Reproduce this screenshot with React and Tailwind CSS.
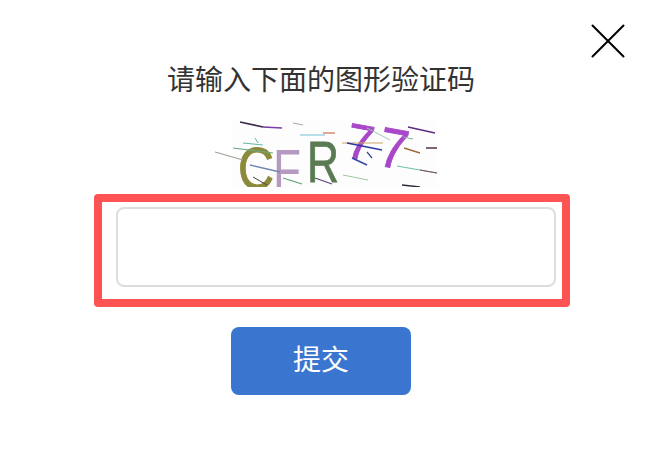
function Captcha() {
  const lines = [
    [240,122,263,127,"#3a2a4a",1.6],[263,127,282,128,"#7a3aa8",1.4],[293,123,303,125,"#a8a8a0",1],
    [300,135,325,135,"#8ec8d8",1.2],[323,133,335,133,"#d07050",1.2],[342,143,383,143,"#c8a860",1.2],
    [347,143,382,150,"#2838a0",1.4],[367,128,390,140,"#a0c8b8",1],[408,127,435,133,"#5a2a80",1.4],
    [403,137,413,139,"#80b0a0",1],[404,148,420,153,"#a06840",1.4],[426,148,437,148,"#40283a",1.4],
    [397,166,437,173,"#70c0b0",1.2],[420,170,437,173,"#805050",1.2],[402,185,420,187,"#302838",1.4],
    [215,152,243,160,"#a0a098",1.2],[233,148,273,153,"#70a880",1.2],[243,143,263,145,"#60b8a0",1],
    [255,138,258,143,"#60b8a0",1],[250,165,280,172,"#7088b0",1.3],[283,178,302,184,"#60a070",1.2],
    [315,178,332,184,"#604878",1.3],[343,175,368,180,"#a0c8a0",1],[352,158,367,165,"#3848a8",1.6],
    [367,152,372,158,"#384890",1.2],[253,177,267,185,"#504838",1],
  ];
  return (
    <svg width="232" height="67" viewBox="212 120 232 67" className="block blur-[0.4px]" aria-label="CFR77">
      <rect x="232" y="120" width="205" height="67" fill="#fdfdfe" />
      <text x="238" y="189" fontFamily="Liberation Sans, sans-serif" fontSize="60" fill="#8b8a3a" stroke="#8b8a3a" strokeWidth="1" textLength="36" lengthAdjust="spacingAndGlyphs">C</text>
      <text x="273" y="190" fontFamily="Liberation Sans, sans-serif" fontSize="58" fill="#b49ac0" textLength="28" lengthAdjust="spacingAndGlyphs">F</text>
      <text x="307" y="182" fontFamily="Liberation Sans, sans-serif" fontSize="57" fill="#5a7a52" stroke="#5a7a52" strokeWidth="0.8" textLength="32" lengthAdjust="spacingAndGlyphs">R</text>
      <text x="344" y="157" fontFamily="Liberation Sans, sans-serif" fontSize="50" fill="#a848c8" stroke="#a848c8" strokeWidth="0.8" textLength="27" lengthAdjust="spacingAndGlyphs" transform="rotate(10 344 157)">7</text>
      <text x="376" y="165" fontFamily="Liberation Sans, sans-serif" fontSize="56" fill="#a848c8" stroke="#a848c8" strokeWidth="0.8" textLength="29" lengthAdjust="spacingAndGlyphs" transform="rotate(10 376 165)">7</text>
      {lines.map(([a,b,c,d,s,w],i)=>(<line key={i} x1={a} y1={b} x2={c} y2={d} stroke={s} strokeWidth={w} />))}
    </svg>
  );
}
export default function App() {
  return (
    <div className="relative w-[650px] h-[452px] bg-white overflow-hidden font-['Liberation_Sans','Noto_Sans_CJK_SC',sans-serif]">
      <button className="absolute top-[24px] right-[25px] w-[34px] h-[34px]" aria-label="关闭">
        <svg width="34" height="34" viewBox="0 0 34 34" fill="none" stroke="#000" strokeWidth="2" strokeLinecap="round">
          <path d="M1.5 1.5 L32.5 32.5 M32.5 1.5 L1.5 32.5" />
        </svg>
      </button>
      <div className="w-[642px] flex flex-col items-center">
        <h1 className="mt-[62px] h-[38px] leading-[38px] text-[28px] font-normal text-[#333333] text-center">请输入下面的图形验证码</h1>
        <div className="mt-[20px] h-[74px] self-start ml-[212px]">
          <Captcha />
        </div>
        <div className="self-start ml-[94px] w-[476px] h-[113px] border-[8px] border-[#fd5353] rounded-[4px] pl-[14px] pt-[5px] bg-white">
          <input className="block w-[440px] h-[80px] border-2 border-[#dddddd] rounded-[8px] bg-white outline-none" />
        </div>
        <button className="mt-[20px] w-[180px] h-[68px] rounded-[8px] bg-[#3a76cf] text-white text-[28px] leading-[68px]">提交</button>
      </div>
    </div>
  );
}
